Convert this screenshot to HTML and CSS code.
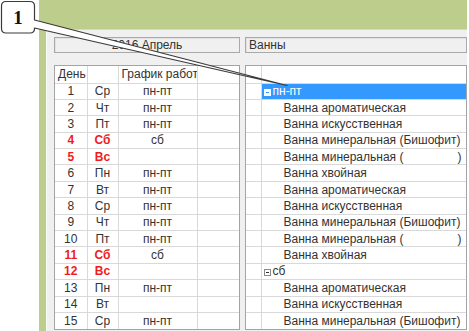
FILE: index.html
```html
<!DOCTYPE html>
<html lang="ru">
<head>
<meta charset="UTF-8">
<title>График работы — Ванны</title>
<link rel="stylesheet" href="styles.css">
</head>

<body>
<div class="app">
  <div class="panel">
    <div class="fields">
      <div class="field field--period">2016 Апрель</div>
      <div class="field field--kind">Ванны</div>
    </div>

    <div class="grids">
      <div class="grid-box grid-box--days">
        <table class="days">
          <colgroup>
            <col class="c-num"><col class="c-wd"><col class="c-plan"><col>
          </colgroup>
          <tr class="head"><td class="l">День</td><td></td><td class="l">График работы</td><td></td></tr>
          <tr><td>1</td><td>Ср</td><td>пн-пт</td><td></td></tr>
          <tr><td>2</td><td>Чт</td><td>пн-пт</td><td></td></tr>
          <tr><td>3</td><td>Пт</td><td>пн-пт</td><td></td></tr>
          <tr class="off"><td>4</td><td>Сб</td><td>сб</td><td></td></tr>
          <tr class="off"><td>5</td><td>Вс</td><td></td><td></td></tr>
          <tr><td>6</td><td>Пн</td><td>пн-пт</td><td></td></tr>
          <tr><td>7</td><td>Вт</td><td>пн-пт</td><td></td></tr>
          <tr><td>8</td><td>Ср</td><td>пн-пт</td><td></td></tr>
          <tr><td>9</td><td>Чт</td><td>пн-пт</td><td></td></tr>
          <tr><td>10</td><td>Пт</td><td>пн-пт</td><td></td></tr>
          <tr class="off"><td>11</td><td>Сб</td><td>сб</td><td></td></tr>
          <tr class="off"><td>12</td><td>Вс</td><td></td><td></td></tr>
          <tr><td>13</td><td>Пн</td><td>пн-пт</td><td></td></tr>
          <tr><td>14</td><td>Вт</td><td></td><td></td></tr>
          <tr><td>15</td><td>Ср</td><td>пн-пт</td><td></td></tr>
        </table>
      </div>

      <div class="grid-box grid-box--baths">
        <table class="baths">
          <colgroup>
            <col class="c-mark"><col>
          </colgroup>
          <tr class="head"><td></td><td></td></tr>
          <tr class="group selected"><td></td><td><span class="toggle"></span>пн-пт</td></tr>
          <tr class="child"><td></td><td>Ванна ароматическая</td></tr>
          <tr class="child"><td></td><td>Ванна искусственная</td></tr>
          <tr class="child"><td></td><td>Ванна минеральная (Бишофит)</td></tr>
          <tr class="child"><td></td><td>Ванна минеральная (<span class="blank"></span>)</td></tr>
          <tr class="child"><td></td><td>Ванна хвойная</td></tr>
          <tr class="child"><td></td><td>Ванна ароматическая</td></tr>
          <tr class="child"><td></td><td>Ванна искусственная</td></tr>
          <tr class="child"><td></td><td>Ванна минеральная (Бишофит)</td></tr>
          <tr class="child"><td></td><td>Ванна минеральная (<span class="blank"></span>)</td></tr>
          <tr class="child"><td></td><td>Ванна хвойная</td></tr>
          <tr class="group"><td></td><td><span class="toggle"></span>сб</td></tr>
          <tr class="child"><td></td><td>Ванна ароматическая</td></tr>
          <tr class="child"><td></td><td>Ванна искусственная</td></tr>
          <tr class="child"><td></td><td>Ванна минеральная (Бишофит)</td></tr>
        </table>
      </div>
    </div>
  </div>
</div>

<!-- callout "1" pointing at the selected group -->
<svg class="callout" width="469" height="331" viewBox="0 0 469 331">
  <path d="M6 1.5 H30 Q34.5 1.5 34.5 6 V20 L287 85.5 L34.5 28 V28.5 Q34.5 33 30 33 H6 Q1.5 33 1.5 28.5 V6 Q1.5 1.5 6 1.5 Z"
        fill="#fff" stroke="#3a3a3a" stroke-width="1.2" stroke-linejoin="round"/>
  <text x="18" y="24" text-anchor="middle" class="callout-num">1</text>
</svg>
</body>
</html>
```

FILE: styles.css
```css
* {
	box-sizing: border-box;
}

body {
	margin: 0;
	width: 469px;
	height: 331px;
	overflow: hidden;
	position: relative;
	background: #fff;
	font-family: "Liberation Sans", Arial, sans-serif;
	font-size: 12px;
	color: #333;
}

.app {
	margin-left: 39px;
	width: 428px;
	height: 331px;
	padding: 29px 0 0 7px;
	background: #bdcd8c;
}

.panel {
	height: 100%;
	padding: 7px 0 0 7px;
	background: #f0f0f0;
	border-top: 1px solid #d6d6d6;
	border-left: 1px solid #f9f9f9;
}

.fields {
	display: flex;
	gap: 5px;
	height: 16px;
}

.field {
	border: 1px solid #a9a9a9;
	box-shadow: inset 1px 1px 0 #e2e2e2;
	padding: 0 3px;
	line-height: 14px;
	white-space: nowrap;
}

.field--period {
	width: 186px;
	text-align: center;
}

.field--kind {
	flex: 1;
}

.grids {
	display: flex;
	gap: 5px;
	margin-top: 12px;
	align-items: flex-start;
}

.grid-box {
	border: 1px solid #a4a4a4;
	background: #fff;
}

.grid-box--days {
	width: 186px;
}

.grid-box--baths {
	width: 222px;
}

table {
	width: 100%;
	border-collapse: collapse;
	border-style: hidden;
	table-layout: fixed;
}

tr {
	height: 16.4px;
}

tr.head {
	height: 17px;
}

td {
	padding: 0 3px;
	border: 1px solid #d9d9d9;
	line-height: 14px;
	white-space: nowrap;
	overflow: hidden;
	text-align: center;
}

td.l {
	text-align: left;
}

.c-num {
	width: 32px;
}

.c-wd {
	width: 31px;
}

.c-plan {
	width: 79px;
}

.days .off td:nth-child(-n+2) {
	color: #f01c1c;
	font-weight: bold;
}

/* baths tree */
.c-mark {
	width: 15px;
}

.baths td {
	text-align: left;
}

.baths .child td:last-child {
	padding-left: 22px;
}

.baths .group td:last-child {
	padding-left: 2px;
}

.baths .selected td:last-child {
	background: #3399fe;
	color: #fff;
}

.toggle {
	display: inline-block;
	position: relative;
	width: 7px;
	height: 7px;
	margin-right: 2px;
	border: 1px solid #8a8a8a;
	vertical-align: -1px;
}

.toggle::after {
	content: "";
	position: absolute;
	left: 1px;
	right: 1px;
	top: 2px;
	height: 1px;
	background: #333;
}

.selected .toggle {
	background: #fff;
	border-color: #fff;
}

.selected .toggle::after {
	background: #3399fe;
}

.blank {
	display: inline-block;
	width: 54px;
}

.callout {
	position: absolute;
	left: 0;
	top: 0;
	pointer-events: none;
}

.callout-num {
	font-family: "Liberation Serif", "Times New Roman", serif;
	font-weight: bold;
	font-size: 19px;
	fill: #111;
}
```
